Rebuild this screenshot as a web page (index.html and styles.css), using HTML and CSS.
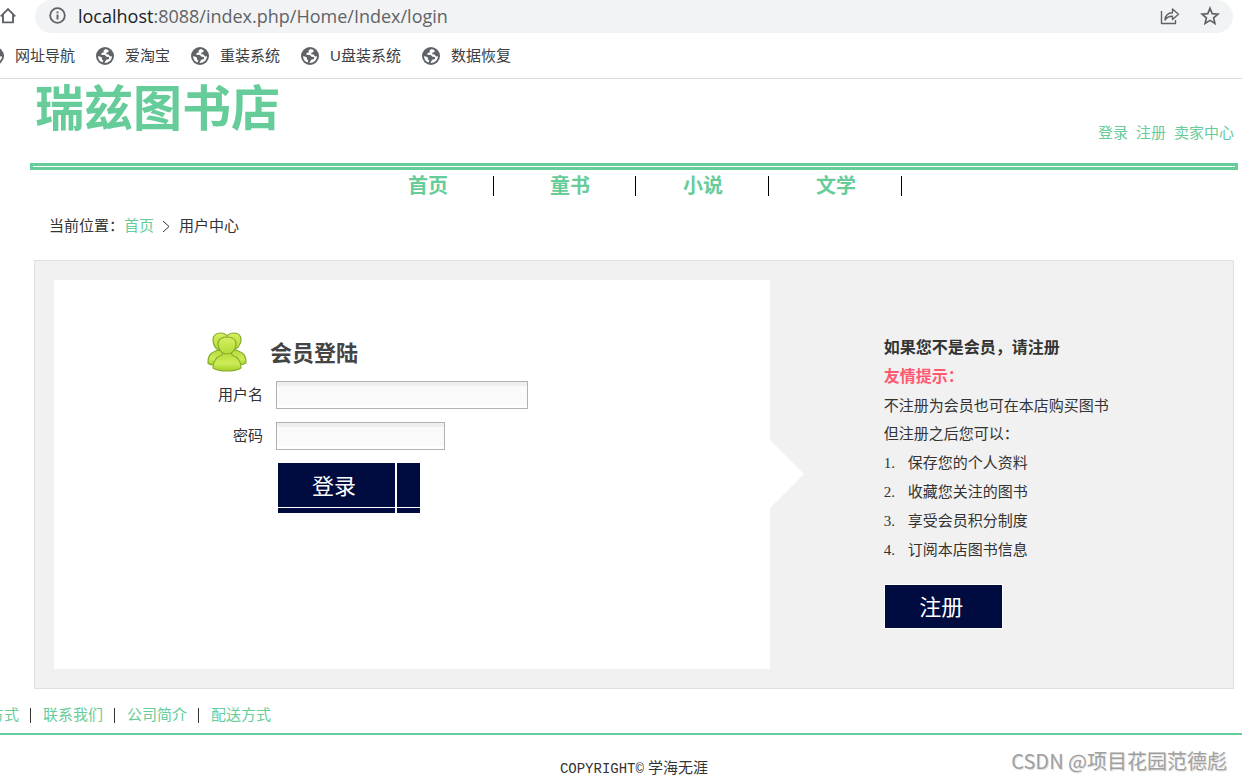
FILE: index.html
```html
<!DOCTYPE html>
<html lang="zh-CN">
<head>
<meta charset="utf-8">
<title>瑞兹图书店 - 用户登录</title>
<link rel="stylesheet" href="styles.css">
</head>
<body>
<svg class="defs" width="0" height="0" aria-hidden="true">
  <symbol id="globe" viewBox="0 0 18 18">
    <circle cx="9" cy="9" r="9" fill="#5f6368"/>
    <path d="M9.500 2 7.400 3.800 8 5.200 5.600 6 5.200 7.800 8.800 8 10.600 9.800 13 10 13 12 10.200 12.800 8.400 15.900C12.400 16.200 16 13 16 9.200L14 9.400 12.600 7.600 10.200 7.200 10.400 5.800 12.600 5 12.400 3ZM2 9.200C2.100 12.200 3.800 14.500 6.400 15.500L7.400 13.600 6 12.400 6 10.800 4 9.400Z" fill="#fff"/>
  </symbol>
</svg>

<div class="toolbar">
  <button class="icon-btn" aria-label="主页">
    <svg width="16" height="18" viewBox="0 0 16 18"><path d="M0.800 9.400 8 2.200 15.200 9.400M3 8V15.400H13V8" fill="none" stroke="#5f6368" stroke-width="1.900"/></svg>
  </button>
  <div class="address">
    <svg width="17" height="17" viewBox="0 0 17 17"><circle cx="8.500" cy="8.500" r="7.300" fill="none" stroke="#5f6368" stroke-width="1.800"/><path d="M8.500 7.500V12.500M8.500 4.400V6.200" stroke="#5f6368" stroke-width="1.900"/></svg>
    <span class="url"><span class="host">localhost</span>:8088/index.php/Home/Index/login</span>
    <button class="icon-btn" aria-label="分享">
      <svg width="20" height="20" viewBox="0 0 20 20"><path d="M1.500 5V17.500H15.500V14M5 14C5.300 9.500 8 7 12.500 6.800V3L18.500 8.300 12.500 13.500V10.300C9 10.200 6.800 11.300 5 14Z" fill="none" stroke="#5f6368" stroke-width="1.400" stroke-linejoin="round"/></svg>
    </button>
    <button class="icon-btn" aria-label="收藏">
      <svg width="20" height="20" viewBox="0 0 20 20"><path d="M10 2.300 12.200 7.600 17.900 8.100 13.600 11.800 14.900 17.400 10 14.400 5.100 17.400 6.400 11.800 2.100 8.100 7.800 7.600Z" fill="none" stroke="#5f6368" stroke-width="1.700"/></svg>
    </button>
  </div>
</div>

<nav class="bookmarks" aria-label="书签">
  <a href="#"><svg width="18" height="18"><use href="#globe"/></svg>网址导航</a>
  <a href="#"><svg width="18" height="18"><use href="#globe"/></svg>爱淘宝</a>
  <a href="#"><svg width="18" height="18"><use href="#globe"/></svg>重装系统</a>
  <a href="#"><svg width="18" height="18"><use href="#globe"/></svg>U盘装系统</a>
  <a href="#"><svg width="18" height="18"><use href="#globe"/></svg>数据恢复</a>
</nav>

<div class="page">
  <header class="header">
    <h1 class="logo">瑞兹图书店</h1>
    <nav class="account"><a href="#">登录</a><a href="#">注册</a><a href="#">卖家中心</a></nav>
  </header>
  <div class="rule"></div>
  <nav class="menu"><a href="#">首页</a><a href="#">童书</a><a href="#">小说</a><a href="#">文学</a></nav>
  <div class="crumbs"><span>当前位置：</span><a href="#">首页</a><svg class="arrow" width="8" height="20" viewBox="0 0 8 20"><path d="M1 5 7 10.500 1 16" fill="none" stroke="#333"/></svg><span>用户中心</span></div>

  <main class="panel">
    <section class="login">
      <div class="login-title">
        <svg width="40" height="40" viewBox="0 0 40 40">
          <defs>
            <linearGradient id="skin" x1="0" y1="0" x2="0" y2="1"><stop offset="0" stop-color="#d6ee62"/><stop offset="1" stop-color="#b4dc36"/></linearGradient>
            <linearGradient id="coat" x1="0" y1="0" x2="0" y2="1"><stop offset="0" stop-color="#b4dc36"/><stop offset=".6" stop-color="#cdec58"/><stop offset="1" stop-color="#a2cf28"/></linearGradient>
          </defs>
          <g stroke="#86ad2a" stroke-width="1.200">
            <path d="M1 31C1 23 4 20 12 18H28C36 20 39 23 39 31Q36 33 31 33H8Q3 33 1 31Z" fill="url(#coat)"/>
            <path d="M6 8C6 3 9 1 14 1S21 4 21 9 17 18 13 18 6 13 6 8Z" fill="url(#skin)"/>
            <path d="M19 8C19 3 22 1 27 1S34 4 34 8 30 18 26 18 19 13 19 8Z" fill="url(#skin)"/>
            <path d="M6 36C6 29 9 25 15 23L16 20H24L25 23C31 25 34 29 34 36Q30 39 20 39T6 36Z" fill="url(#coat)"/>
            <path d="M11 12C11 7 15 5 20 5S29 7 29 12C29 16 26 22 20 22S11 16 11 12Z" fill="url(#skin)"/>
          </g>
        </svg>
        <h2>会员登陆</h2>
      </div>
      <form class="form">
        <label for="user">用户名</label><input id="user" class="field wide" type="text">
        <label for="pass">密码</label><input id="pass" class="field" type="password">
        <button class="submit" type="button">登录</button>
      </form>
    </section>
    <aside class="tips">
      <p class="strong">如果您不是会员，请注册</p>
      <p class="strong warn">友情提示：</p>
      <p>不注册为会员也可在本店购买图书</p>
      <p>但注册之后您可以：</p>
      <p><span class="num">1.</span>保存您的个人资料</p>
      <p><span class="num">2.</span>收藏您关注的图书</p>
      <p><span class="num">3.</span>享受会员积分制度</p>
      <p><span class="num">4.</span>订阅本店图书信息</p>
      <button class="register" type="button">注册</button>
    </aside>
  </main>
</div>

<footer class="footer">
  <nav class="links"><a href="#">方式</a><a href="#">联系我们</a><a href="#">公司简介</a><a href="#">配送方式</a></nav>
  <p class="copyright"><span class="latin">COPYRIGHT©</span> 学海无涯</p>
</footer>
<div class="watermark">CSDN @项目花园范德彪</div>
</body>
</html>
```
FILE: styles.css
```css
* { box-sizing: border-box; }

body {
  margin: 0;
  position: relative;
  overflow: hidden;
  min-height: 100vh;
  background: #fff;
  color: #333;
  font: 15px/20px "Liberation Sans", "Noto Sans CJK SC", sans-serif;
}

h1, h2, p { margin: 0; }
a { color: #66cc99; text-decoration: none; }
button { font-family: inherit; cursor: pointer; }
svg { display: block; flex: none; }
.defs { position: absolute; }

/* Browser chrome */
.toolbar {
  display: flex;
  align-items: center;
  gap: 19px;
  padding-right: 9px;
}
.icon-btn { padding: 0; border: 0; background: none; }
.toolbar > .icon-btn { padding-bottom: 2px; }
.address {
  flex: 1;
  display: flex;
  align-items: center;
  gap: 20px;
  height: 33px;
  padding: 0 13px 2px 14px;
  border-radius: 17px;
  background: #f1f3f4;
}
.url {
  flex: 1;
  margin-left: -8px;
  font: 18px/24px "Open Sans", sans-serif;
  color: #5f6368;
}
.host { color: #202124; }

.bookmarks {
  display: flex;
  gap: 21px;
  height: 46px;
  margin-left: -14px;
  padding-top: 1px;
  border-bottom: 1px solid #dadce0;
}
.bookmarks a {
  display: flex;
  align-items: center;
  gap: 11px;
  color: #3c4043;
}

/* Shop header */
.page { margin: 0 4px 0 30px; }
.header {
  display: flex;
  justify-content: space-between;
  align-items: flex-end;
  height: 84px;
  padding: 0 4px 20px 5px;
}
.logo {
  align-self: flex-start;
  color: #66cc99;
  font-size: 49px;
  line-height: 60px;
}
.account { display: flex; gap: 8px; }
.rule {
  height: 7px;
  border: 3px solid #66cc99;
}
.menu {
  display: flex;
  justify-content: center;
  padding: 6px 0 0 4px;
}
.menu a {
  padding: 0 45px 0 47px;
  border-right: 1px solid #000;
  font-size: 20px;
  font-weight: bold;
}
.menu a:first-child { padding-left: 38px; }
.menu a:nth-child(2) { padding-left: 56px; }
.crumbs {
  display: flex;
  padding: 20px 19px 24px;
}
.arrow { margin: 0 9px 0 8px; }

/* Login panel */
.panel {
  display: flex;
  margin: 0 4px;
  padding: 19px;
  border: 1px solid #e0e0e0;
  background: #f1f1f1;
}
.login {
  position: relative;
  flex: 0 0 61.7%;
  min-height: 389px;
  padding: 52px 0 0 153px;
  background: #fff;
}
.login::after {
  content: "";
  position: absolute;
  left: 100%;
  top: 160px;
  border: 34px solid transparent;
  border-left-color: #fff;
  border-right-width: 0;
}
.login-title {
  display: flex;
  align-items: center;
  gap: 23px;
}
.login-title h2 {
  padding-top: 4px;
  font-size: 22px;
  line-height: 36px;
  color: #444;
}
.form {
  display: grid;
  grid-template-columns: 56px 1fr;
  gap: 13px;
  justify-items: start;
  align-items: center;
  padding-top: 9px;
}
.form label { justify-self: end; }
.field {
  width: 169px;
  height: 28px;
  padding: 4px 6px;
  border: 1px solid #b2b2b2;
  background: linear-gradient(#efefef 4px, #fafafa 4px 23px, #fff 23px);
  font: inherit;
}
.field.wide { width: 252px; }
.submit {
  grid-column: 2;
  width: 144px;
  height: 50px;
  padding: 0 28px 9px 0;
  border: 0;
  background:
    linear-gradient(#fff, #fff) 0 44px / 100% 1px no-repeat,
    linear-gradient(90deg, #fff 2px, #000b40 2px 119px, #fff 119px 121px, #000b40 121px);
  color: #fff;
  font-size: 22px;
}

.tips {
  flex: 1;
  padding: 53px 0 0 114px;
}
.tips p { line-height: 29px; }
.tips p:nth-child(n+4) { line-height: 28px; }
.tips p:nth-child(n+5) { line-height: 29px; }
.tips .strong { font-size: 16px; font-weight: bold; }
.tips .warn { color: #ff5a71; }
.tips .num {
  display: inline-block;
  width: 24px;
  font-family: "Liberation Serif", serif;
  line-height: 16px;
}
.register {
  display: block;
  width: 119px;
  height: 45px;
  margin-top: 20px;
  padding: 0 4px 3px 0;
  border: 1px solid #fff;
  background: #000b40;
  color: #fff;
  font-size: 22px;
}

/* Footer */
.links {
  display: flex;
  align-items: center;
  height: 46px;
  margin-left: -11px;
  padding-top: 8px;
  border-bottom: 2px solid #66cc99;
}
.links a {
  display: flex;
  align-items: center;
  line-height: 20px;
}
.links a + a::before {
  content: "";
  width: 1px;
  height: 15px;
  margin: 0 12px 0 11px;
  background: #333;
}
.copyright {
  margin: 0 4px 0 30px;
  padding-top: 23px;
  text-align: center;
}
.latin { font: 14px/20px "Liberation Mono", monospace; }

.watermark {
  position: absolute;
  right: 15px;
  bottom: 6px;
  color: #a0a0a0;
  font: 20px/26px "Noto Sans CJK SC", sans-serif;
  text-shadow: 1px 1px 1px #ddd;
}
```
